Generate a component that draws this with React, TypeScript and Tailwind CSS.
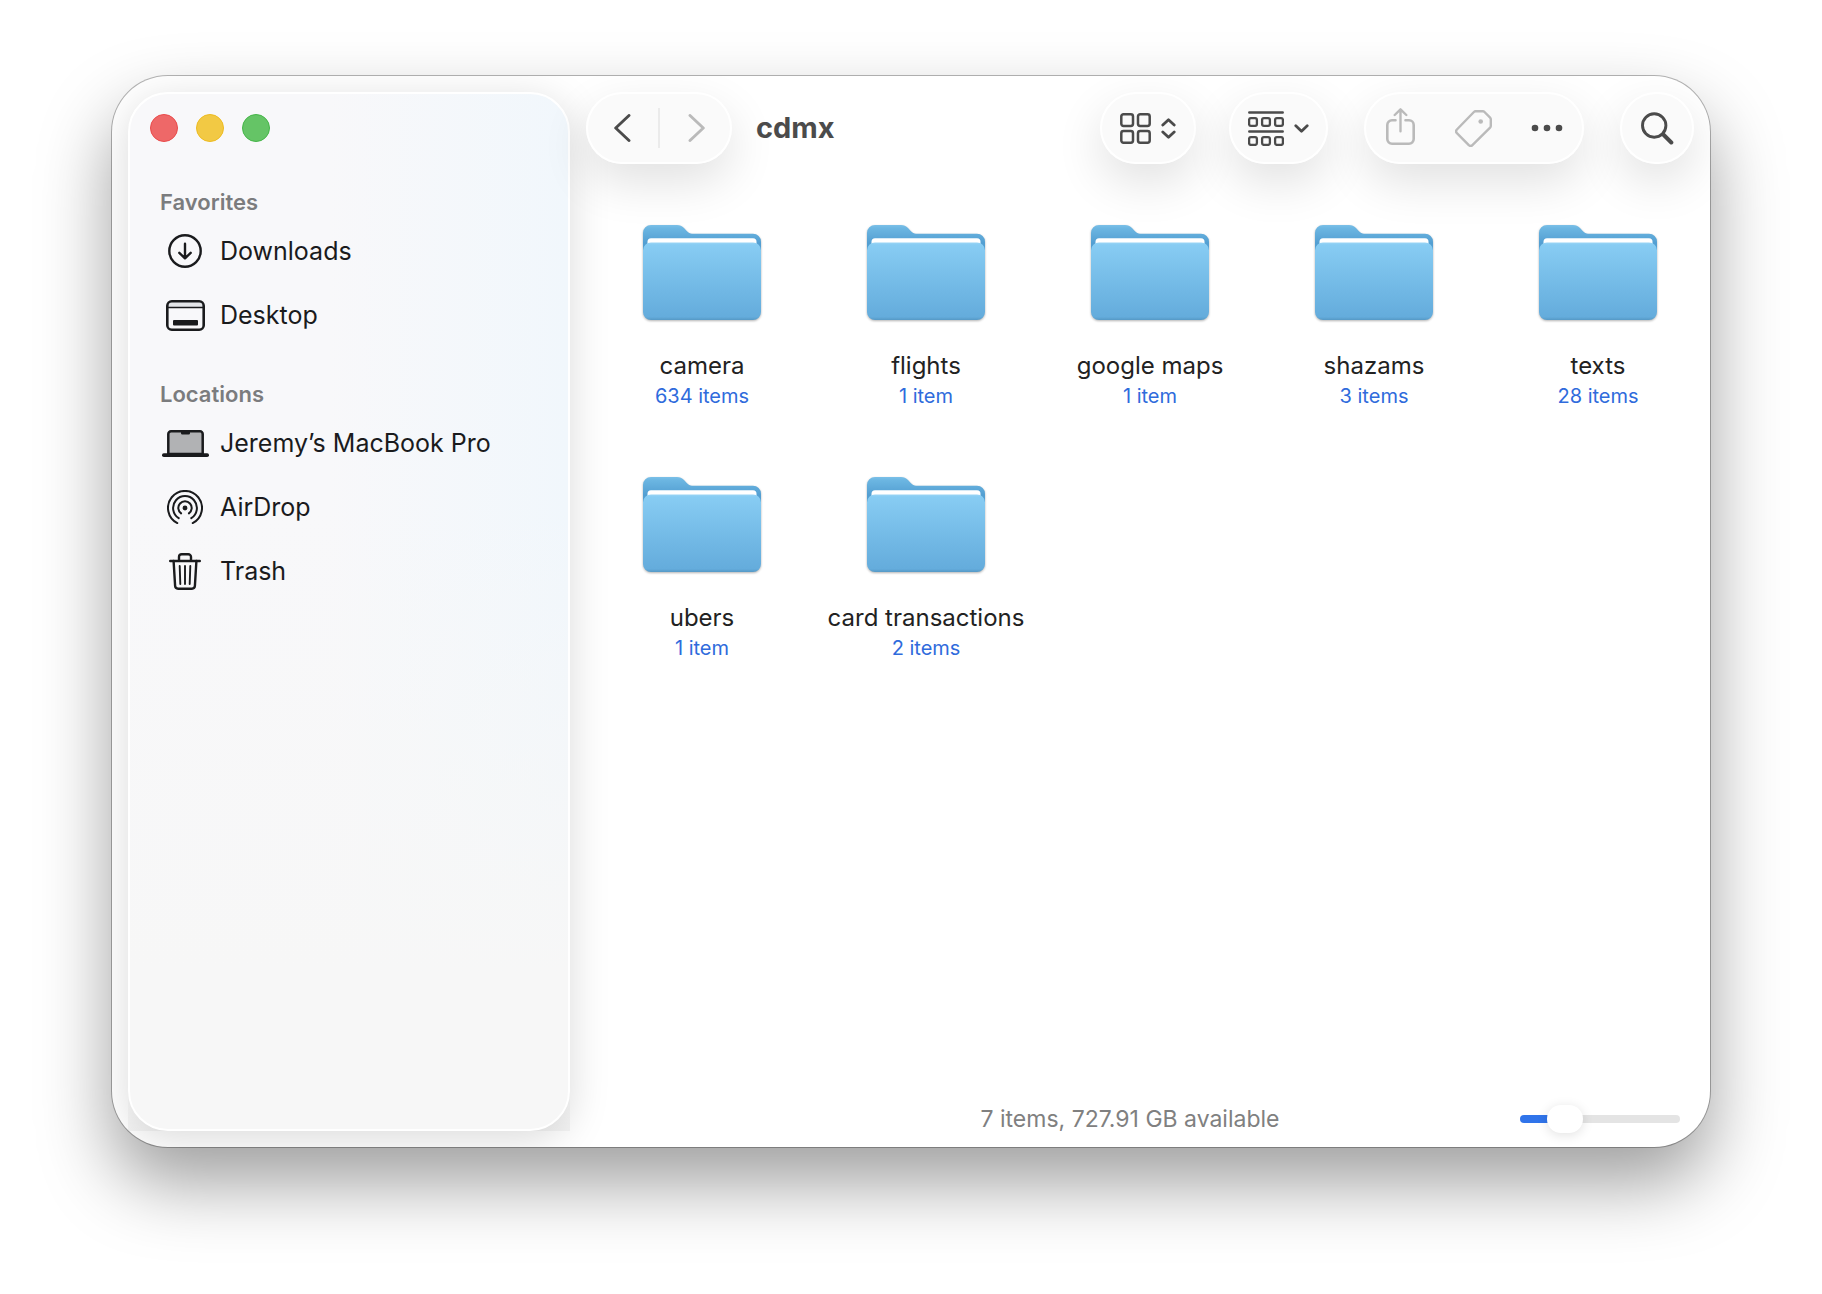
import { useState, type ReactNode } from 'react'
import clsx from 'clsx'

type SidebarItem = { name: string; icon: ReactNode }
type SidebarSection = { title: string; items: SidebarItem[] }
type Folder = { name: string; count: number }

const FOLDERS: Folder[] = [
  { name: 'camera', count: 634 },
  { name: 'flights', count: 1 },
  { name: 'google maps', count: 1 },
  { name: 'shazams', count: 3 },
  { name: 'texts', count: 28 },
  { name: 'ubers', count: 1 },
  { name: 'card transactions', count: 2 },
]

function formatCount(n: number) {
  return `${n} ${n === 1 ? 'item' : 'items'}`
}

function DownloadsIcon() {
  return (
    <svg width="34" height="34" viewBox="0 0 34 34" fill="none" stroke="currentColor" strokeWidth="2.4" strokeLinecap="round" strokeLinejoin="round">
      <circle cx="17" cy="17" r="15.7" />
      <path d="M17 9.8v14.4M11.3 18.8l5.7 5.6 5.7-5.6" />
    </svg>
  )
}

function DesktopIcon() {
  return (
    <svg width="39" height="31" viewBox="0 0 39 31" fill="none" stroke="currentColor" strokeWidth="2.6">
      <path d="M2 7V5.5A4 4 0 0 1 6 2h27a4 4 0 0 1 4 3.5V7z" fill="#e3e5e8" stroke="none" />
      <rect x="1.3" y="1.3" width="36.4" height="28.4" rx="4.5" />
      <path d="M2 7.5h35" strokeWidth="1.6" />
      <rect x="7" y="20" width="25" height="5.6" rx="1" fill="currentColor" stroke="none" />
    </svg>
  )
}

function LaptopIcon() {
  return (
    <svg width="47" height="27" viewBox="0 0 47 27">
      <path d="M6.3 24V4a2.7 2.7 0 0 1 2.7-2.7h29A2.7 2.7 0 0 1 40.700 4v20z" fill="#b1b2b4" stroke="currentColor" strokeWidth="2.5" />
      <path d="M19 1.5h9v1.7a1.3 1.3 0 0 1-1.3 1.3h-6.4A1.3 1.3 0 0 1 19 3.2z" fill="currentColor" />
      <rect y="23.3" width="47" height="3.7" rx="1.8" fill="currentColor" />
    </svg>
  )
}

function AirDropIcon() {
  return (
    <svg width="36" height="34" viewBox="0 0 36 34" fill="none" stroke="currentColor" strokeWidth="2" strokeLinecap="round">
      <path d="M10.3 33.1a17 17 0 1 1 15.4 0" />
      <path d="M11.7 28.1a11.9 11.9 0 1 1 12.6 0" />
      <path d="M14.1 23.4a6.700 6.700 0 1 1 7.800 0" />
      <circle cx="18" cy="18" r="2.4" fill="currentColor" stroke="none" />
    </svg>
  )
}

function TrashIcon() {
  return (
    <svg width="32" height="37" viewBox="0 0 32 37" fill="none" stroke="currentColor" strokeWidth="2.4" strokeLinecap="round" strokeLinejoin="round">
      <path d="M1.2 8h29.6M10 8V4a2.8 2.8 0 0 1 2.8-2.8h6.4A2.8 2.8 0 0 1 22 4v4" />
      <path d="M4.6 8l1.5 24.8a3 3 0 0 0 3 2.9h13.800a3 3 0 0 0 3-2.900L27.400 8" />
      <path d="M10.7 13l.6 18M16 13v18M21.3 13l-.6 18" strokeWidth="1.9" />
    </svg>
  )
}

function ChevronIcon({ direction }: { direction: 'left' | 'right' }) {
  return (
    <svg width="17" height="28" viewBox="0 0 17 28" fill="none" stroke="currentColor" strokeWidth="2.9" strokeLinecap="round" strokeLinejoin="round">
      <path d={direction === 'left' ? 'M15 1.5L1.7 14 15 26.5' : 'M2 1.5L15.3 14 2 26.5'} />
    </svg>
  )
}

function GridIcon() {
  return (
    <svg width="31" height="31" viewBox="0 0 31 31" fill="none" stroke="currentColor" strokeWidth="2.5">
      <rect x="1.3" y="1.3" width="11.7" height="11.7" rx="2.2" />
      <rect x="18" y="1.3" width="11.7" height="11.7" rx="2.2" />
      <rect x="1.3" y="18" width="11.7" height="11.7" rx="2.2" />
      <rect x="18" y="18" width="11.7" height="11.7" rx="2.2" />
    </svg>
  )
}

function UpDownIcon() {
  return (
    <svg width="15" height="21" viewBox="0 0 15 21" fill="none" stroke="currentColor" strokeWidth="2.8" strokeLinecap="round" strokeLinejoin="round">
      <path d="M1.8 7l5.7-5.3L13.2 7M1.8 14l5.7 5.3 5.7-5.3" />
    </svg>
  )
}

function GroupIcon() {
  return (
    <svg width="36" height="35" viewBox="0 0 36 35" fill="none" stroke="currentColor" strokeWidth="2.3" strokeLinecap="round">
      <path d="M1.3 1.6h33.4M1.3 20.5h33.4" strokeWidth="2.5" />
      {[6, 25].map((y) =>
        [0, 13, 26].map((x) => (
          <rect key={`${x}-${y}`} x={x + 1.1} y={y + 1.1} width="7.8" height="7.8" rx="1.8" />
        )),
      )}
    </svg>
  )
}

function DownIcon() {
  return (
    <svg width="15" height="9" viewBox="0 0 15 9" fill="none" stroke="currentColor" strokeWidth="2.8" strokeLinecap="round" strokeLinejoin="round">
      <path d="M1.8 1.8l5.7 5.4 5.7-5.4" />
    </svg>
  )
}

function ShareIcon() {
  return (
    <svg width="29" height="37" viewBox="0 0 29 37" fill="none" stroke="currentColor" strokeWidth="2.6" strokeLinecap="round" strokeLinejoin="round" className="mb-1">
      <path d="M9.5 12.2H6a4.7 4.7 0 0 0-4.7 4.7V31A4.7 4.7 0 0 0 6 35.700h17a4.7 4.7 0 0 0 4.7-4.7V16.900a4.7 4.7 0 0 0-4.7-4.7h-3.500" />
      <path d="M14.500 23.300V1.500M8.700 7l5.800-5.700L20.300 7" strokeWidth="2.400" />
    </svg>
  )
}

function TagIcon() {
  return (
    <svg width="37" height="37" viewBox="0 0 37 37" fill="none" stroke="currentColor" strokeWidth="2.4" strokeLinejoin="round">
      <path d="M20.6 1.3h7.2a2.4 2.4 0 0 1 1.7.7l5.6 5.6a2.4 2.4 0 0 1 .7 1.7v6.6a2.4 2.4 0 0 1-.7 1.7L17.4 35.1a2.6 2.6 0 0 1-3.6 0L1.9 23.1a2.6 2.6 0 0 1 0-3.6L18.900 2a2.400 2.400 0 0 1 1.700-.7z" />
      <circle cx="25.7" cy="11.5" r="2.3" fill="currentColor" stroke="none" />
    </svg>
  )
}

function MoreIcon() {
  return (
    <svg width="32" height="8" viewBox="0 0 32 8" fill="currentColor">
      <circle cx="4" cy="4" r="3.3" />
      <circle cx="16" cy="4" r="3.3" />
      <circle cx="28" cy="4" r="3.3" />
    </svg>
  )
}

function SearchIcon() {
  return (
    <svg width="33" height="33" viewBox="0 0 33 33" fill="none" stroke="currentColor" strokeLinecap="round">
      <circle cx="13.2" cy="13.5" r="11.7" strokeWidth="2.9" />
      <path d="M22.3 22.5l8 8" strokeWidth="4" />
    </svg>
  )
}

// gradients shared by every folder, rendered once
function FolderDefs() {
  return (
    <svg width="0" height="0" className="absolute" aria-hidden="true">
      <defs>
        <linearGradient id="folder-back" x1="0" y1="0" x2="0" y2="1">
          <stop offset="0" stopColor="#7bc0e8" />
          <stop offset="0.1" stopColor="#6cb6e2" />
          <stop offset="0.6" stopColor="#539fd2" />
          <stop offset="1" stopColor="#539fd2" />
        </linearGradient>
        <linearGradient id="folder-front" x1="0" y1="0" x2="0" y2="1">
          <stop offset="0" stopColor="#9ad5f5" />
          <stop offset="0.03" stopColor="#87ccf3" />
          <stop offset="0.96" stopColor="#64acdc" />
          <stop offset="1" stopColor="#5699c6" />
        </linearGradient>
      </defs>
    </svg>
  )
}

function FolderIcon() {
  return (
    <svg width="118" height="96" viewBox="0 0 118 96" className="drop-shadow-[0_1px_1px_rgba(0,0,0,0.3)]">
      <path d="M0 30V8a8 8 0 0 1 8-8h26c3 0 5 1 7 3l3 3.3c1.5 1.7 3 2.4 5 2.4h61a8 8 0 0 1 8 8V30z" fill="url(#folder-back)" />
      <rect x="4.5" y="13.2" width="109" height="12" rx="3.5" fill="#fff" />
      <path d="M0 25.5a8 8 0 0 1 8-8h102a8 8 0 0 1 8 8V87a8 8 0 0 1-8 8H8a8 8 0 0 1-8-8z" fill="url(#folder-front)" />
    </svg>
  )
}

const SECTIONS: SidebarSection[] = [
  {
    title: 'Favorites',
    items: [
      { name: 'Downloads', icon: <DownloadsIcon /> },
      { name: 'Desktop', icon: <DesktopIcon /> },
    ],
  },
  {
    title: 'Locations',
    items: [
      { name: 'Jeremy’s MacBook Pro', icon: <LaptopIcon /> },
      { name: 'AirDrop', icon: <AirDropIcon /> },
      { name: 'Trash', icon: <TrashIcon /> },
    ],
  },
]

function Sidebar() {
  return (
    <div className="m-4 mr-0 flex w-[442px] shrink-0 rounded-t-[40px] bg-linear-to-b from-transparent from-95% to-black/4">
      <aside className="flex-1 rounded-[40px] border-2 border-white bg-[#f7f7f7] bg-[linear-gradient(to_bottom,transparent_40%,#f7f7f7_85%),linear-gradient(to_right,#f8f8fa_45%,#f1f7fc)] pt-5 pl-5 shadow-[0_8px_40px_rgba(0,0,0,0.15)]">
        <div className="flex gap-[18px]">
          <button type="button" aria-label="Close" className="size-7 rounded-full border border-[#e94b4b] bg-[#ee6868]" />
          <button type="button" aria-label="Minimize" className="size-7 rounded-full border border-[#edbb20] bg-[#f2c944]" />
          <button type="button" aria-label="Zoom" className="size-7 rounded-full border border-[#45b548] bg-[#65c466]" />
        </div>
        <nav className="mt-[43px] flex flex-col gap-[30px] pl-[10px]">
          {SECTIONS.map((section) => (
            <section key={section.title}>
              <h2 className="h-[34px] text-[22px] leading-[34px] font-semibold text-[#7b7c7e]">{section.title}</h2>
              <ul>
                {section.items.map((item) => (
                  <li key={item.name}>
                    <a href="#" className="flex h-16 items-center gap-[10px] text-[25px] leading-9 text-[#1a1b1d]">
                      <span className="flex w-[50px] justify-center">{item.icon}</span>
                      {item.name}
                    </a>
                  </li>
                ))}
              </ul>
            </section>
          ))}
        </nav>
      </aside>
    </div>
  )
}

function ToolbarPill({ className, children }: { className?: string; children: ReactNode }) {
  return (
    <div
      className={clsx(
        'flex h-[72px] items-stretch rounded-full bg-[#fafafa] text-[#4b4b4b] shadow-[inset_0_0_0_2px_#fff,0_18px_48px_rgba(0,0,0,0.12)]',
        className,
      )}
    >
      {children}
    </div>
  )
}

function ToolbarButton({ label, disabled, children }: { label: string; disabled?: boolean; children: ReactNode }) {
  return (
    <button
      type="button"
      aria-label={label}
      disabled={disabled}
      className="flex flex-1 items-center justify-center gap-[10px] disabled:text-[#bababa]"
    >
      {children}
    </button>
  )
}

function Toolbar() {
  return (
    <header className="flex items-center px-4 pt-4">
      <ToolbarPill className="w-[146px]">
        <ToolbarButton label="Back">
          <ChevronIcon direction="left" />
        </ToolbarButton>
        <span className="my-auto h-10 w-0.5 bg-[#ebebeb]" />
        <ToolbarButton label="Forward" disabled>
          <ChevronIcon direction="right" />
        </ToolbarButton>
      </ToolbarPill>
      <h1 className="ml-6 text-[29px] leading-9 font-bold text-[#4b4b4b]">cdmx</h1>
      <div className="ml-auto flex gap-9">
        <div className="flex gap-[33px]">
          <ToolbarPill className="w-24">
            <ToolbarButton label="View as icons">
              <GridIcon />
              <UpDownIcon />
            </ToolbarButton>
          </ToolbarPill>
          <ToolbarPill className="w-[99px]">
            <ToolbarButton label="Group items">
              <GroupIcon />
              <DownIcon />
            </ToolbarButton>
          </ToolbarPill>
        </div>
        <ToolbarPill className="w-[220px]">
          <ToolbarButton label="Share" disabled>
            <ShareIcon />
          </ToolbarButton>
          <ToolbarButton label="Edit tags" disabled>
            <TagIcon />
          </ToolbarButton>
          <ToolbarButton label="More">
            <MoreIcon />
          </ToolbarButton>
        </ToolbarPill>
        <ToolbarPill className="w-[74px]">
          <ToolbarButton label="Search">
            <SearchIcon />
          </ToolbarButton>
        </ToolbarPill>
      </div>
    </header>
  )
}

function StatusBar() {
  const [size, setSize] = useState(22)
  // the fill ends under the middle of the 36px thumb
  const fill = `calc(18px + (100% - 36px) * ${size / 100})`

  return (
    <footer className="mt-auto grid h-14 grid-cols-[160px_1fr_160px] items-center pr-[30px] pl-[10px]">
      <p className="col-start-2 text-center text-[23px] text-[#808080]">7 items, 727.91 GB available</p>
      <input
        type="range"
        aria-label="Icon size"
        value={size}
        onChange={(e) => setSize(Number(e.target.value))}
        style={{ backgroundImage: `linear-gradient(to right, #3074ea ${fill}, #e4e4e4 ${fill})` }}
        className="h-2 w-full appearance-none rounded-full [&::-webkit-slider-thumb]:h-7 [&::-webkit-slider-thumb]:w-9 [&::-webkit-slider-thumb]:appearance-none [&::-webkit-slider-thumb]:rounded-full [&::-webkit-slider-thumb]:bg-white [&::-webkit-slider-thumb]:shadow-[0_2px_12px_rgba(0,0,0,0.12)]"
      />
    </footer>
  )
}

export default function App() {
  return (
    <div className="flex min-h-screen bg-white px-28 pt-[76px] pb-[147px] font-[Inter,sans-serif]">
      <FolderDefs />
      <div className="flex flex-1 overflow-hidden rounded-[56px] bg-white shadow-[0_0_0_1px_rgba(0,0,0,0.28),0_36px_72px_rgba(0,0,0,0.38)]">
        <Sidebar />
        <main className="flex min-w-0 flex-1 flex-col">
          <Toolbar />
          <ul className="mt-[61px] grid grid-cols-5 gap-y-[63px] pl-5">
            {FOLDERS.map((folder) => (
              <li key={folder.name} className="flex flex-col items-center">
                <FolderIcon />
                <span className="mt-[29px] text-[24px] leading-8 text-[#222]">{folder.name}</span>
                <span className="h-8 text-[20px] leading-7 text-[#2f6bdc]">{formatCount(folder.count)}</span>
              </li>
            ))}
          </ul>
          <StatusBar />
        </main>
      </div>
    </div>
  )
}
